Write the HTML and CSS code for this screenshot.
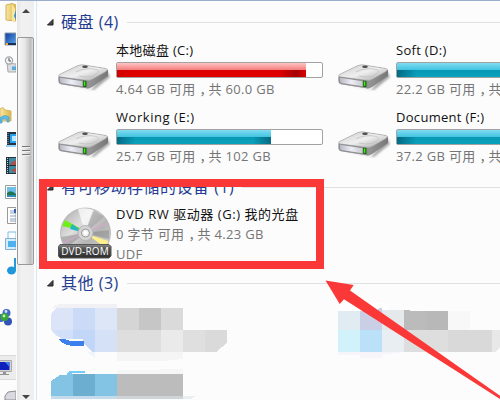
FILE: index.html
```
<!DOCTYPE html>
<html lang="zh-CN">
<head>
<meta charset="utf-8">
<title>计算机</title>
<link rel="stylesheet" href="styles.css">
</head>
<body>
<svg width="0" height="0" class="defs">
  <defs>
    <linearGradient id="metal" x1="0" y1="0" x2="1" y2="1"><stop offset="0" stop-color="#cacaca"/><stop offset=".5" stop-color="#efefef"/><stop offset="1" stop-color="#a4a4a4"/></linearGradient>
    <linearGradient id="side" x1="0" x2="1"><stop offset="0" stop-color="#c4c4c4"/><stop offset="1" stop-color="#777"/></linearGradient>
    <linearGradient id="face" x1="0" x2="1"><stop offset="0" stop-color="#b9b9c4"/><stop offset=".5" stop-color="#eeeef8"/><stop offset="1" stop-color="#c9c9d0"/></linearGradient>
    <linearGradient id="disc" x1="0" y1="0" x2="1" y2="1"><stop offset="0" stop-color="#a5a5a5"/><stop offset=".35" stop-color="#dedede"/><stop offset=".6" stop-color="#b4b4b4"/><stop offset="1" stop-color="#dedede"/></linearGradient>
    <linearGradient id="plate" x1="0" y1="0" x2="0" y2="1"><stop offset="0" stop-color="#8a8a8a"/><stop offset=".3" stop-color="#555"/><stop offset="1" stop-color="#2c2c2c"/></linearGradient>
    <linearGradient id="folder" x1="0" x2="1"><stop offset="0" stop-color="#f8e7a2"/><stop offset="1" stop-color="#dcb64c"/></linearGradient>
    <linearGradient id="screen" x1="0" y1="0" x2="1" y2="1"><stop offset="0" stop-color="#123b9c"/><stop offset="1" stop-color="#58a8ee"/></linearGradient>
    <filter id="soft" x="-20%" y="-50%" width="140%" height="200%"><feGaussianBlur stdDeviation="1.1"/></filter>
    <symbol id="drive" viewBox="0 0 54 28">
      <path d="M3 21 37 27 53 14 50 8 35 26z" fill="#777" opacity=".65" filter="url(#soft)"/>
      <path d="M1.500 13Q1.500 11.500 3 11L21 2.500Q24 1.500 27 2L49 5.500Q51 6 51 8V13L36 23.500Q33 25.500 31 25.500L3.500 21Q1.500 20.500 1.500 19z" fill="url(#side)"/>
      <path d="M1.800 12.500Q2 11.500 4 10.800L21 2.500Q24 1.500 27 2L49 5.500Q51.500 6.500 49 8.500L35 16.500Q32.500 18 29 17.300L3.500 14Q1.500 13.600 1.800 12.500z" fill="url(#metal)" stroke="#a2a2a2" stroke-width=".6"/>
      <path d="M19 9Q28 4 40 6.500Q44 9 36 13Q28 15 22 13" fill="none" stroke="#c4c4c4" stroke-width=".9"/>
      <ellipse cx="28" cy="3.700" rx="2.800" ry="1.300" fill="#4e4e4e"/>
      <path d="M1.500 13.500 30 17.800Q32 18.200 31.500 25.500L4 21.200Q1.500 20.800 1.500 18z" fill="#909093"/>
      <path d="M3 14.800 25.500 18.200V23.200L4.500 20Q3 19.700 3 18z" fill="url(#face)"/>
      <path d="M26 17.400 29.500 18V24.300L26 23.700z" fill="#176b12"/>
      <path d="M26.800 18.500H28.300V22.800H26.800z" fill="#46e514"/>
    </symbol>
  </defs>
</svg>
<div class="window">
  <nav class="tree">
    <svg width="16" height="399" viewBox="0 1 16 399">
      <path d="M6 5 12 3.500 16 5V21L6 20z" fill="url(#folder)" stroke="#d1b15b"/><path d="M12 4V21L15 22V9z" fill="#f8e5a0"/><path d="M14 16 16 10V20z" fill="#378fc6"/>
      <path d="M5 33H16V45H5z" fill="url(#screen)" stroke="#8a9cae"/><path d="M6 43H16V45H6z" fill="#1a3157"/><path d="M6 43h2v2H6z" fill="#f6a928"/>
      <path d="M7 63 16 64V72H8z" fill="#d9dde0" stroke="#aaa"/><circle cx="9" cy="60.500" r="3.600" fill="#f3f3f3" stroke="#a1a7ab" stroke-width="1.200"/><path d="M9 58V61H11" fill="none" stroke="#555"/><path d="M12 66.500H16V70H12z" fill="#59a9dc"/>
      <path d="M0 109 3 107.500 5 110 11 111V121H0z" fill="url(#folder)" stroke="#d7b65c"/><path d="M0 118Q4 114 9 117V122H7V119H2V123H0z" fill="#5bc0ea" stroke="#4298ca" stroke-width=".7"/>
      <path d="M7 132H16V145H7z" fill="#233341"/><path d="M10 134H16V143H10z" fill="#26a2f2"/><path d="M12 136h4v5h-4z" fill="#bde8ff"/><path d="M6 146H16" stroke="#91d1f5" stroke-width="2"/><path d="M8 133V145" stroke="#97a9b8" stroke-dasharray="1 1"/>
      <path d="M6 157H16V174H6z" fill="#25323b"/><path d="M9 158H16V165H9zM9 166H16V173H9z" fill="#3d8aa3"/><path d="M11 163 16 160V165H10zM11 170 16 168V173z" fill="#a9524b"/><path d="M7.500 158V174" stroke="#c7d2d8" stroke-dasharray="1 1"/>
      <path d="M5.500 185.500H16V198.500H5.500z" fill="#fff" stroke="#9b9b9b"/><path d="M7 187H16V197H7z" fill="#70bee8"/><path d="M7 193Q11 189 16 194V197H7z" fill="#24734f"/><path d="M7 195H16V197H7z" fill="#2e8db7"/>
      <path d="M7.500 207.500H16V223.500H7.500z" fill="#fff" stroke="#999"/><path d="M10 211h4M10 213h6M10 216h6M10 219h6M10 221h6" stroke="#8ba2bc"/><path d="M14 209h2v4h-2z" fill="#3b5db0"/>
      <path d="M8 232H16V241H8z" fill="#f9fdff" stroke="#81bce2"/><path d="M5.500 238.500H16V249.500H5.500z" fill="#d5edfa" stroke="#85aed0"/><path d="M8 241H16V247H8z" fill="#50b1ee"/>
      <ellipse cx="11.500" cy="270.500" rx="4.500" ry="4" fill="#2097db"/><path d="M15 271V258" stroke="#2899d8" stroke-width="2"/>
      <circle cx="6.500" cy="313" r="4" fill="#4567cc"/><circle cx="8" cy="321.500" r="4" fill="#3254b5"/><circle cx="1" cy="318" r="4" fill="#4567cc"/><circle cx="4.500" cy="317" r="4" fill="#38a43c"/><circle cx="4" cy="316" r="1.400" fill="#c2f6a7"/><circle cx="6" cy="311.500" r="1.400" fill="#d3e4ff"/>
      <path d="M0 355.500H16V379.500H0z" fill="#ececec"/><path d="M0 355.500H16M0 379.500H16" stroke="#dadada"/><path d="M0 360.500H11.500V371.500H0" fill="#d4d4d4" stroke="#aaa"/><path d="M0 362H9.500V370H0z" fill="#1020bd"/><path d="M5 362H9.500V367z" fill="#3b83eb"/><path d="M3 372H6V374H9V375H0V374H3z" fill="#939393"/>
      <path d="M5 396 8 392 16 391V400H5z" fill="#d9d9df" stroke="#8c8c94"/>
    </svg>
  </nav>
  <div class="scrollbar">
    <svg class="arrow" width="10" height="6" viewBox="0 0 10 6"><path d="M1 5 5 1 9 5z" fill="#444"/></svg>
    <div class="thumb"><i></i><i></i><i></i></div>
    <svg class="arrow" width="10" height="6" viewBox="0 0 10 6"><path d="M1 1H9L5 5z" fill="#444"/></svg>
  </div>
  <main class="content">
    <section class="hard-disks">
      <h2 class="heading"><svg width="7" height="7" viewBox="0 0 7 7"><path d="M6 .500V6H.500z" fill="#444" stroke="#222"/></svg><span>硬盘 (4)</span></h2>
      <div class="drives">
        <div class="tile"><svg class="drive"><use href="#drive"/></svg><div class="info"><div class="name">本地磁盘 (C:)</div><div class="meter"><div class="fill full" style="width:92%"></div></div><div class="detail">4.64 GB 可用<span class="comma">，</span>共 60.0 GB</div></div></div>
        <div class="tile"><svg class="drive"><use href="#drive"/></svg><div class="info"><div class="name">Soft (D:)</div><div class="meter"><div class="fill" style="width:80%"></div></div><div class="detail">22.2 GB 可用<span class="comma">，</span>共</div></div></div>
        <div class="tile"><svg class="drive"><use href="#drive"/></svg><div class="info"><div class="name wide">Working (E:)</div><div class="meter"><div class="fill" style="width:75%"></div></div><div class="detail">25.7 GB 可用<span class="comma">，</span>共 102 GB</div></div></div>
        <div class="tile"><svg class="drive"><use href="#drive"/></svg><div class="info"><div class="name">Document (F:)</div><div class="meter"><div class="fill" style="width:80%"></div></div><div class="detail">37.2 GB 可用<span class="comma">，</span>共</div></div></div>
      </div>
    </section>
    <section class="removable">
      <h2 class="heading"><svg width="7" height="7" viewBox="0 0 7 7"><path d="M6 .500V6H.500z" fill="#444" stroke="#222"/></svg><span>有可移动存储的设备 (1)</span></h2>
      <div class="tile optical">
        <div class="dvd">
          <svg width="54" height="54" viewBox="0 0 54 54">
            <circle cx="27.500" cy="27" r="25" fill="url(#disc)" stroke="#aaa" stroke-width=".7"/>
            <path d="M27 27 20 3Q27 1 35 4z" fill="#fff" opacity=".7"/><path d="M27 27 36 4 46 11z" fill="#999" opacity=".5"/><path d="M27 27 3 31Q4 37 8 42z" fill="#878787" opacity=".5"/>
            <path d="M27 25 4 20 7 14z" fill="#70ee18"/><path d="M27 27 12 23 14 18z" fill="#25b7bb"/><path d="M27 27 50 35 48 42z" fill="#fff08c"/><path d="M27 27 50 17M27 27 5 37" stroke="#e1a2d3"/><path d="M27 27 51 24V33z" fill="#777" opacity=".4"/>
            <circle cx="27.500" cy="27" r="7.500" fill="#d4d4d4" stroke="#b4b4b4"/><circle cx="27.500" cy="27" r="4" fill="#eee" stroke="#999"/><circle cx="27.500" cy="27" r="2" fill="#fff"/>
            <path d="M2 38.500H51L53 40.500V50L51 52H2L.500 50V40.500z" fill="url(#plate)" stroke="#555"/>
          </svg>
          <span class="plate">DVD-ROM</span>
        </div>
        <div class="info"><div class="name wide">DVD RW 驱动器 (G:) 我的光盘</div><div class="detail line">0 字节 可用<span class="comma">，</span>共 4.23 GB</div><div class="detail line">UDF</div></div>
      </div>
    </section>
    <section class="others">
      <h2 class="heading"><svg width="7" height="7" viewBox="0 0 7 7"><path d="M6 .500V6H.500z" fill="#444" stroke="#222"/></svg><span>其他 (3)</span></h2>
      <svg class="mosaic" width="463" height="104" viewBox="37 296 463 104" shape-rendering="crispEdges">
        <path d="M55 306 65 304.500H117V309H52z" fill="#f1f1f5"/>
        <path d="M57 309H73V340H65Q54 338 51 330V316Q52 312 57 309z" fill="#dbe5f7"/><path d="M73 309H95V331H73z" fill="#cbdaf6"/><path d="M95 309H117V331H95z" fill="#dce6f6"/><path d="M53 331H73V340H61z" fill="#d1dff8"/><path d="M73 331H95V353H92L84 345 83 340H73z" fill="#c2d6f8"/><path d="M95 331H117V353H95z" fill="#d4e1f7"/>
        <path d="M59 340H64L70 342H84V346.500H70Q63 346 59 340z" fill="#3c80ee"/><path d="M87 353H95V359z" fill="#f0f4fb"/>
        <path d="M117 309H139V331H117z" fill="#d5d5d5"/><path d="M139 309H161V331H139z" fill="#c6c6c6"/><path d="M161 309H183V331H161z" fill="#dadada"/><path d="M117 331H161V353H117z" fill="#dedede"/><path d="M161 331H183V353H161z" fill="#eaeaea"/><path d="M183 331H205V353H183z" fill="#dfdfdf"/><path d="M205 331H227V344L216 353H205z" fill="#dadada"/>
        <path d="M117 353H183V360L168 361.500H117z" fill="#f5f5f5"/>
        <path d="M66 375 69 372H85V373.500H73L71 375z" fill="#74cbf7"/><path d="M117 371.500 183 370V375H117z" fill="#f6f6f6"/>
        <path d="M51 397V382L60 376 73 375V397z" fill="#83c3e3"/><path d="M73 375H95V397H73z" fill="#6baed0"/><path d="M95 375H117V397H95z" fill="#83c3e3"/><path d="M117 375H183V397H117z" fill="#bcbcbc"/><path d="M51 397H117V400H51z" fill="#c3dbea"/><path d="M117 397H183V400H117z" fill="#ced4d8"/><path d="M183 397H196L191 400H183z" fill="#e9eef1"/>
        <path d="M339 312V308L344 304H382L388 308V312z" fill="#fff"/>
        <path d="M338 312H360V331H338z" fill="#e0ebf2"/><path d="M360 312H376L379 309H382V331H360z" fill="#cacfe5"/><path d="M382 310.500H404V331H382z" fill="#e6e9eb"/><path d="M404 311H410V312H426V331H404z" fill="#bbb"/><path d="M426 312H448V331H426z" fill="#b8b8b8"/><path d="M448 312H470V331H448z" fill="#f8f8f8"/>
        <path d="M338 331H360V353H338z" fill="#d1f1fb"/><path d="M360 331H382V353H360z" fill="#bbe1f9"/><path d="M382 331H404V353H382z" fill="#e9eef2"/><path d="M404 331H448V353H404z" fill="#dedede"/><path d="M448 331H492V353H448z" fill="#d9d9d9"/><path d="M492 331H500V349L495 353H492z" fill="#e8e8e8"/>
        <path d="M338 353H404L382 356V359H360V356H338z" fill="#f7f5fa"/>
      </svg>
    </section>
  </main>
  <div class="marker"></div>
  <svg class="pointer" width="175" height="120" viewBox="325 280 175 120"><path d="M325.500 280.500 353.700 285 350 290.500 500 395.700V399L344 299.300 339.700 304z" fill="#fb3838"/></svg>
</div>
</body>
</html>
```
FILE: styles.css
```
* { box-sizing: border-box; }
body {
  margin: 0;
  width: 500px;
  height: 400px;
  overflow: hidden;
  font-family: "Open Sans", "Noto Sans CJK SC", sans-serif;
  font-size: 13px;
  color: #111;
}
.defs { position: absolute; }
.window {
  position: relative;
  display: flex;
  width: 500px;
  height: 400px;
  overflow: hidden;
  border-top: 1px solid #9badca;
  background: #fcfcfc;
}
.tree { width: 17px; flex: none; background: #fcfcfc; }
.tree svg { display: block; }
.scrollbar {
  flex: none;
  width: 17px;
  display: flex;
  flex-direction: column;
  align-items: center;
  justify-content: space-between;
  padding: 7px 0 0;
  background: linear-gradient(90deg, #e6e6e6, #f1f1f1 30%, #eee);
}
.arrow { flex: none; margin-left: 1px; }
.thumb {
  width: 17px;
  height: 228px;
  margin: 22px 0 129px;
  flex: none;
  display: flex;
  flex-direction: column;
  align-items: center;
  justify-content: center;
  gap: 2px;
  border: 1px solid #999;
  border-radius: 2px;
  background: linear-gradient(90deg, #f8f8f8, #e7e7e7 45%, #bdbdbd 85%, #ddd);
}
.thumb i { width: 8px; height: 2px; background: #777; border-bottom: 1px solid #eee; }
.content {
  flex: none;
  width: 464px;
  margin-left: 2px;
  padding-top: 9px;
  border-left: 1px solid #d6e7f6;
}
.heading {
  height: 24px;
  margin: 0;
  padding-left: 10px;
  display: flex;
  align-items: center;
  font-size: 16px;
  font-weight: 400;
  line-height: 24px;
  letter-spacing: .5px;
  color: #263c91;
  white-space: nowrap;
}
.heading svg { flex: none; margin-right: 7px; }
.heading::after { content: ""; flex: 1; height: 1px; margin-left: 8px; background: #e1e1e1; }
.drives {
  display: grid;
  grid-template-columns: 280px 280px;
  grid-auto-rows: 67px;
  padding: 6px 0 0 19px;
}
.tile { display: flex; }
.drive { flex: none; width: 54px; height: 28px; margin: 23px 5px 0 1px; }
.info { width: 207px; white-space: nowrap; }
.name { height: 22px; line-height: 20px; letter-spacing: .3px; }
.name.wide { letter-spacing: .55px; }
.meter {
  height: 16px;
  border: 1px solid #a2a2a2;
  border-radius: 2px;
  background: #fff;
}
.fill {
  height: 14px;
  background:
    linear-gradient(90deg, rgba(0, 65, 90, .55), transparent 12%, transparent 88%, rgba(0, 65, 90, .55)) 0 7px / 100% 7px no-repeat,
    linear-gradient(#80dcf0, #44c4e2 48%, #0798b4 50%, #0aa2bd);
}
.fill.full {
  background:
    linear-gradient(90deg, rgba(155, 0, 0, .2), transparent 8%, transparent 86%, rgba(125, 0, 0, .6) 95%, transparent) 0 7px / 100% 7px no-repeat,
    linear-gradient(#ffc4c4, #f58080 48%, #dc0000 50%, #e00000);
}
.detail {
  height: 20px;
  margin-top: 1px;
  line-height: 20px;
  letter-spacing: .32px;
  color: #757575;
}
.comma { display: inline-block; width: 13px; text-indent: 4px; }
.removable .heading { margin-top: 1px; }
.optical { height: 68px; padding: 5px 0 0 21px; }
.dvd { position: relative; width: 54px; height: 54px; margin: 2px 4px 0 0; flex: none; }
.dvd svg { display: block; }
.plate {
  position: absolute;
  left: 0;
  top: 38px;
  width: 54px;
  height: 14px;
  text-align: center;
  font-size: 10px;
  line-height: 14px;
  letter-spacing: .15px;
  color: #fff;
}
.optical .name { height: 20px; }
.optical .line { margin-top: 0; }
.others .heading { margin-top: 4px; }
.mosaic { display: block; }
.marker {
  position: absolute;
  left: 39px;
  top: 178px;
  width: 285px;
  height: 90px;
  border: 8px solid #fb3838;
}
.pointer { position: absolute; left: 325px; top: 279px; }
```
